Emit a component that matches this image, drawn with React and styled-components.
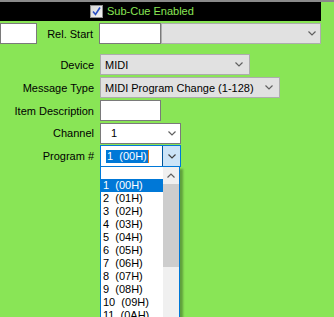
import React from 'react';
import styled, { createGlobalStyle } from 'styled-components';

const GlobalStyle = createGlobalStyle`
	body {
		margin: 0;
		background: #89e556;
		font-family: 'Liberation Sans', Arial, sans-serif;
		font-size: 11px;
		color: #000;
	}
`;

// page frame
const Page = styled.div`
	position: relative;
	width: 334px;
	height: 317px;
	overflow: hidden;
	background: #89e556;
`;

const TopRule = styled.div`
	height: 2px;
	background: #8a8a8a;
`;

const HeaderBar = styled.div`
	width: 321px;
	height: 19px;
	background: #000;
	display: flex;
	align-items: center;
	padding-left: 90px;
	box-sizing: border-box;
`;

const CheckBox = styled.span`
	width: 11px;
	height: 11px;
	border: 1px solid #8e8e8e;
	background: linear-gradient(135deg, #d8d8d8, #f4f4f4);
	display: flex;
	align-items: center;
	justify-content: center;
	margin-right: 4px;
`;

const HeaderText = styled.span`
	color: #8ae655;
	font-size: 11px;
	line-height: 19px;
`;

const TopRow = styled.div`
	display: flex;
	align-items: center;
	height: 21px;
	margin-top: 2px;
`;

const TextBox = styled.div`
	box-sizing: border-box;
	width: ${(p) => p.$w}px;
	height: 21px;
	background: #fff;
	border: 1px solid #7a7a7a;
	flex-shrink: 0;
`;

const Label = styled.div`
	width: ${(p) => p.$w}px;
	flex-shrink: 0;
	text-align: right;
	padding-right: ${(p) => p.$pad ?? 6}px;
	box-sizing: border-box;
	white-space: nowrap;
`;

const Form = styled.div`
	display: flex;
	flex-direction: column;
	gap: 2px;
	margin-top: 10px;
`;

const Row = styled.div`
	display: flex;
	align-items: center;
	height: ${(p) => p.$h || 21}px;
`;

const Combo = styled.div`
	box-sizing: border-box;
	position: relative;
	width: ${(p) => p.$w}px;
	height: ${(p) => p.$h || 21}px;
	flex-shrink: 0;
	display: flex;
	align-items: center;
	padding-left: 4px;
	background: ${(p) => (p.$white ? '#fff' : '#e1e1e1')};
	border: 1px solid ${(p) => (p.$focus ? '#0078d7' : p.$white ? '#7a7a7a' : '#adadad')};
	white-space: pre;
`;

const Arrow = styled.span`
	margin-left: auto;
	width: ${(p) => p.$bw || 17}px;
	align-self: stretch;
	display: flex;
	align-items: center;
	justify-content: center;
	margin-right: ${(p) => p.$mr ?? 2}px;
`;

const DropButton = styled.span`
	margin-left: auto;
	width: 17px;
	align-self: stretch;
	display: flex;
	align-items: center;
	justify-content: center;
	background: #cce4f7;
	border-left: 1px solid #005499;
`;

const Selected = styled.span`
	background: #0078d7;
	color: #fff;
	padding: 0 1px;
	line-height: 13px;
	margin-left: 1px;
`;

const Caret = styled.span`
	width: 1px;
	height: 13px;
	background: #e07a1f;
`;

// dropdown list overlay
const ListBox = styled.div`
	position: absolute;
	left: 100px;
	top: 166px;
	width: 80px;
	height: 170px;
	box-sizing: border-box;
	border: 1px solid #0078d7;
	background: #fff;
	display: flex;
	box-shadow: 3px 3px 2px rgba(0, 0, 0, 0.3);
`;

const Items = styled.div`
	flex: 1;
	display: flex;
	flex-direction: column;
	padding-top: 12px;
`;

const Item = styled.div`
	height: 13px;
	line-height: 13px;
	padding-left: 2px;
	white-space: pre;
	background: ${(p) => (p.$active ? '#0078d7' : 'transparent')};
	color: ${(p) => (p.$active ? '#fff' : '#000')};
`;

const ScrollBar = styled.div`
	width: 16px;
	background: #f0f0f0;
	display: flex;
	flex-direction: column;
`;

const ScrollButton = styled.div`
	height: 17px;
	display: flex;
	align-items: center;
	justify-content: center;
`;

const Thumb = styled.div`
	height: 83px;
	background: #cdcdcd;
`;

const Chevron = ({ up, color = '#606060' }) => (
	<svg width="8" height="5" viewBox="0 0 8 5">
		<polyline
			points={up ? '0.5,4.5 4,1 7.5,4.5' : '0.5,0.5 4,4 7.5,0.5'}
			fill="none"
			stroke={color}
			strokeWidth="1.2"
		/>
	</svg>
);

const hex = (n) => n.toString(16).toUpperCase().padStart(2, '0');
const programs = Array.from({ length: 12 }, (_, i) => `${i + 1}  (${hex(i)}H)`);

export default function App() {
	return (
		<Page>
			<GlobalStyle />
			<TopRule />
			<HeaderBar>
				<CheckBox>
					<svg width="9" height="9" viewBox="0 0 9 9">
						<polyline points="1,4.5 3.5,7.5 8,0.5" fill="none" stroke="#2b4fc4" strokeWidth="1.6" />
					</svg>
				</CheckBox>
				<HeaderText>Sub-Cue Enabled</HeaderText>
			</HeaderBar>

			<TopRow>
				<TextBox $w={37} />
				<Label $w={62}>Rel. Start</Label>
				<TextBox $w={62} />
				<Combo $w={160}>
					<Arrow $mr={0}>
						<Chevron />
					</Arrow>
				</Combo>
			</TopRow>

			<Form>
				<Row>
					<Label $w={100}>Device</Label>
					<Combo $w={150}>
						MIDI
						<Arrow>
							<Chevron />
						</Arrow>
					</Combo>
				</Row>
				<Row>
					<Label $w={100}>Message Type</Label>
					<Combo $w={180}>
						MIDI Program Change (1-128)
						<Arrow>
							<Chevron />
						</Arrow>
					</Combo>
				</Row>
				<Row>
					<Label $w={100}>Item Description</Label>
					<TextBox $w={61} />
				</Row>
				<Row $h={20}>
					<Label $w={100}>Channel</Label>
					<Combo $w={81} $h={21} $white>
						{'  1'}
						<Arrow $mr={0}>
							<Chevron />
						</Arrow>
					</Combo>
				</Row>
				<Row $h={22}>
					<Label $w={100}>Program #</Label>
					<Combo $w={81} $h={22} $white $focus>
						<Selected>{'1  (00H)'}</Selected>
						<Caret />
						<DropButton>
							<Chevron color="#404040" />
						</DropButton>
					</Combo>
				</Row>
			</Form>

			<ListBox>
				<Items>
					{programs.map((p, i) => (
						<Item key={p} $active={i === 0}>
							{p}
						</Item>
					))}
				</Items>
				<ScrollBar>
					<ScrollButton>
						<Chevron up />
					</ScrollButton>
					<Thumb />
				</ScrollBar>
			</ListBox>
		</Page>
	);
}
